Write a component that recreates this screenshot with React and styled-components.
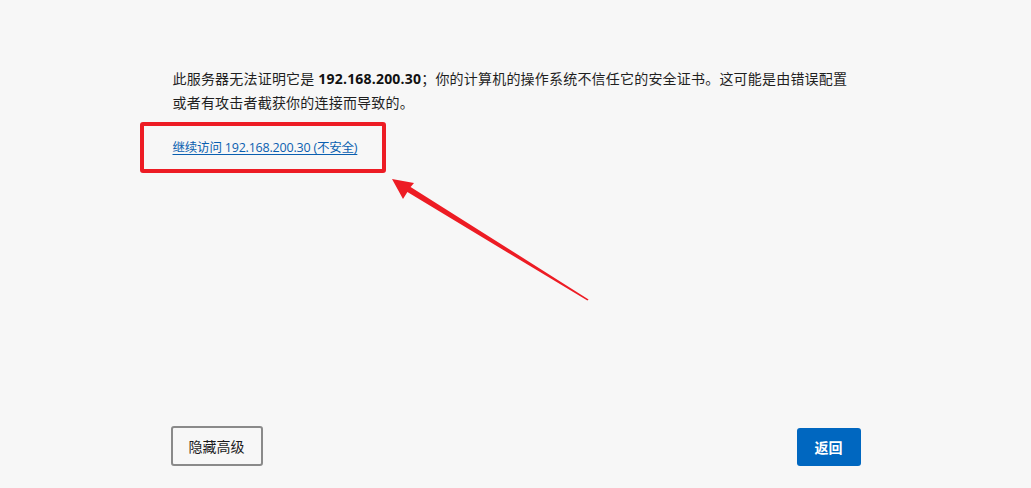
import React from 'react';
import styled, { createGlobalStyle } from 'styled-components';

const GlobalStyle = createGlobalStyle`
  html, body {
    margin: 0;
    padding: 0;
    background: #f7f7f7;
  }
  body {
    font-family: "Open Sans", "Noto Sans CJK SC", sans-serif;
  }
`;

const Page = styled.div`
  position: relative;
  min-height: 100vh;
  box-sizing: border-box;
  background: #f7f7f7;
  padding: 67px 0 22px;
  display: flex;
  flex-direction: column;
`;

const Column = styled.div`
  width: 690px;
  margin: 0 auto;
  flex: 1;
  display: flex;
  flex-direction: column;
`;

const Message = styled.p`
  margin: 0;
  padding: 0 12px 0 2px;
  font-size: 14px;
  line-height: 24px;
  letter-spacing: 0.2px;
  color: #1f1f1f;

  strong {
    font-weight: 700;
    color: #111;
    letter-spacing: 0.2px;
  }
`;

const LinkRow = styled.div`
  position: relative;
  margin-top: 19px;
  padding-left: 2px;
  line-height: 24px;
`;

const ProceedLink = styled.a`
  font-size: 12.5px;
  letter-spacing: -0.2px;
  color: #0a5fb0;
  text-decoration: underline;
  text-underline-offset: 2px;
  cursor: pointer;
`;

const Highlight = styled.div`
  position: absolute;
  left: -31px;
  top: -12px;
  width: 246px;
  height: 51px;
  box-sizing: border-box;
  border: 4px solid #ed1c24;
  border-radius: 3px;
  pointer-events: none;
`;

const Arrow = styled.svg`
  position: absolute;
  left: 385px;
  top: 172px;
  width: 210px;
  height: 135px;
  pointer-events: none;
`;

const Footer = styled.div`
  margin-top: auto;
  display: flex;
  justify-content: space-between;
  align-items: flex-end;
`;

const Button = styled.button`
  font-family: "Open Sans", "Noto Sans CJK SC", sans-serif;
  font-size: 14px;
  border-radius: 3px;
  cursor: pointer;
  padding: 0;
  height: ${p => (p.$primary ? '38px' : '40px')};
  width: ${p => (p.$primary ? '64px' : '92px')};
  background: ${p => (p.$primary ? '#0067c0' : '#f7f7f7')};
  color: ${p => (p.$primary ? '#fff' : '#1c1c1c')};
  font-weight: ${p => (p.$primary ? 700 : 400)};
  border: ${p => (p.$primary ? 'none' : '2px solid #8a8a8a')};
`;

export default function App() {
  return (
    <Page>
      <GlobalStyle />
      <Column>
        <Message>
          此服务器无法证明它是 <strong>192.168.200.30</strong>；你的计算机的操作系统不信任它的安全证书。这可能是由错误配置或者有攻击者截获你的连接而导致的。
        </Message>
        <LinkRow>
          <ProceedLink>继续访问 192.168.200.30 (不安全)</ProceedLink>
          <Highlight />
        </LinkRow>
        <Footer>
          <Button>隐藏高级</Button>
          <Button $primary>返回</Button>
        </Footer>
      </Column>
      <Arrow viewBox="385 172 210 135">
        <polygon
          points="392,179 414,183 410.6,186.9 588.6,299.4 587.4,300.6 407.4,192.1 403,199"
          fill="#ed1c24"
        />
      </Arrow>
    </Page>
  );
}
